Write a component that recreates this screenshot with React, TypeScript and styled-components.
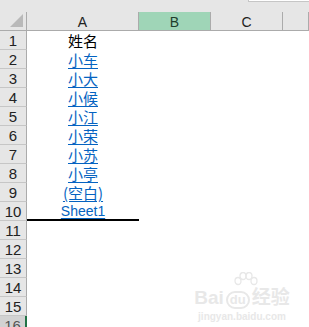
import React from "react";
import styled, { createGlobalStyle } from "styled-components";

const GlobalStyle = createGlobalStyle`
  html, body {
    margin: 0;
    padding: 0;
    background: #ffffff;
  }
`;

type Cell = { text: string; link?: boolean; cjk?: boolean };

const rows: Cell[] = [
  { text: "姓名", cjk: true },
  { text: "小车", link: true, cjk: true },
  { text: "小大", link: true, cjk: true },
  { text: "小候", link: true, cjk: true },
  { text: "小江", link: true, cjk: true },
  { text: "小荣", link: true, cjk: true },
  { text: "小苏", link: true, cjk: true },
  { text: "小亭", link: true, cjk: true },
  { text: "(空白)", link: true, cjk: true },
  { text: "Sheet1", link: true },
  { text: "" },
  { text: "" },
  { text: "" },
  { text: "" },
  { text: "" },
  { text: "" },
];

const columns = ["A", "B", "C", ""];

const App = () => {
  return (
    <Sheet>
      <GlobalStyle />
      <TopStrip>
        <FormulaEdge />
      </TopStrip>
      <Grid>
        <Corner>
          <CornerMark />
        </Corner>
        {columns.map((c) => (
          <ColHead key={c || "D"} selected={c === "B"}>
            {c}
          </ColHead>
        ))}
        {rows.map((r, i) => (
          <React.Fragment key={i}>
            <RowHead active={i === 15}>{i + 1}</RowHead>
            <ACell link={r.link} cjk={r.cjk} underlined={i === 9}>
              {r.text}
            </ACell>
            <Blank />
            <Blank />
            <Blank />
          </React.Fragment>
        ))}
      </Grid>
      <Watermark>
        <Paw>
          <svg width="26" height="20" viewBox="0 0 26 20">
            <g fill="none" stroke="#e8e8e8" strokeWidth="1.3">
              <ellipse cx="5" cy="9" rx="3" ry="3.5" />
              <ellipse cx="10" cy="4" rx="3" ry="3.5" />
              <ellipse cx="16" cy="4" rx="3" ry="3.5" />
              <ellipse cx="21" cy="9" rx="3" ry="3.5" />
            </g>
          </svg>
        </Paw>
        <Brand>
          Bai<Du>du</Du>经验
        </Brand>
        <Site>jingyan.baidu.com</Site>
      </Watermark>
    </Sheet>
  );
};

const Sheet = styled.div`
  position: relative;
  width: 309px;
  height: 327px;
  overflow: hidden;
  background: #ffffff;
  font-family: "Liberation Sans", Arial, "Noto Sans CJK SC", sans-serif;
`;

const TopStrip = styled.div`
  height: 12px;
  background: #e6e6e6;
  display: flex;
  justify-content: flex-end;
`;

const FormulaEdge = styled.div`
  width: 60px;
  height: 1px;
  background: #ffffff;
  border-left: 1px solid #c6c6c6;
  border-bottom: 1px solid #c6c6c6;
`;

const Grid = styled.div`
  display: grid;
  grid-template-columns: 27px 112px 72px 72px 1fr;
  grid-auto-rows: 19px;
`;

const Corner = styled.div`
  position: relative;
  background: #e6e6e6;
  border-right: 1px solid #ababab;
  border-bottom: 1px solid #ababab;
`;

const CornerMark = styled.div`
  position: absolute;
  right: 3px;
  bottom: 3px;
  width: 0;
  height: 0;
  border-left: 13px solid transparent;
  border-bottom: 13px solid #b9b9b9;
`;

const ColHead = styled.div<{ selected?: boolean }>`
  display: flex;
  align-items: center;
  justify-content: center;
  background: ${(p) => (p.selected ? "#9fd5b7" : "#e6e6e6")};
  border-right: 1px solid #ababab;
  border-bottom: 1px solid #ababab;
  color: ${(p) => (p.selected ? "#1e3e2c" : "#222222")};
  font-size: 14px;
  padding-top: 2px;
  box-sizing: border-box;
`;

const RowHead = styled.div<{ active?: boolean }>`
  display: flex;
  align-items: center;
  justify-content: center;
  background: ${(p) => (p.active ? "#d2d2d2" : "#e6e6e6")};
  border-right: ${(p) => (p.active ? "2px solid #217346" : "1px solid #ababab")};
  border-bottom: 1px solid #c6c6c6;
  color: ${(p) => (p.active ? "#555555" : "#222222")};
  font-size: 15px;
  padding-top: 1px;
  box-sizing: border-box;
`;

const ACell = styled.div<{ link?: boolean; cjk?: boolean; underlined?: boolean }>`
  display: flex;
  align-items: center;
  justify-content: center;
  box-sizing: border-box;
  font-size: ${(p) => (p.cjk ? "15px" : "14px")};
  font-family: ${(p) =>
    p.cjk
      ? '"Noto Sans CJK SC", "Liberation Sans", sans-serif'
      : '"Liberation Sans", Arial, sans-serif'};
  color: ${(p) => (p.link ? "#0563c1" : "#000000")};
  text-decoration: ${(p) => (p.link ? "underline" : "none")};
  text-underline-offset: 2px;
  border-bottom: ${(p) => (p.underlined ? "2px solid #000000" : "none")};
  line-height: 1;
  white-space: nowrap;
`;

const Blank = styled.div`
  background: #ffffff;
`;

const Watermark = styled.div`
  position: absolute;
  left: 192px;
  top: 272px;
  width: 100px;
  display: flex;
  flex-direction: column;
  align-items: center;
  color: #e8e8e8;
  pointer-events: none;
`;

const Paw = styled.div`
  height: 16px;
  margin-left: 8px;
`;

const Brand = styled.div`
  font-size: 19px;
  font-weight: bold;
  line-height: 20px;
  font-family: "Liberation Sans", "Noto Sans CJK SC", sans-serif;
`;

const Du = styled.span`
  display: inline-block;
  font-size: 13px;
  line-height: 14px;
  border: 2px solid #e8e8e8;
  border-radius: 10px;
  padding: 0 2px;
  margin: 0 2px;
`;

const Site = styled.div`
  font-size: 10px;
  font-weight: bold;
  margin-top: 2px;
`;

export default App;
